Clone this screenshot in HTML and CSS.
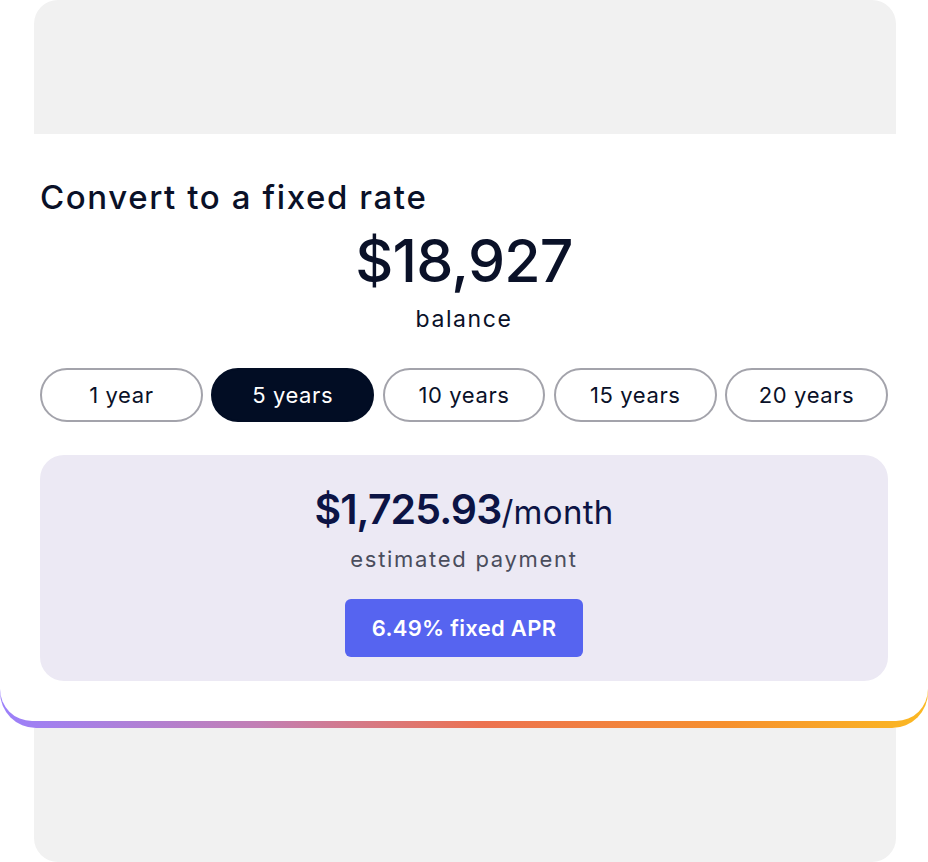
FILE: index.html
```html
<!DOCTYPE html>
<html>
<head>
<meta charset="utf-8">
<link rel="stylesheet" href="styles.css">
</head>
<body>
<div class="page">
  <div class="grey grey-top"></div>
  <div class="card-wrap">
    <div class="card">
      <h1 class="title">Convert to a fixed rate</h1>
      <div class="balance">
        <div class="amount">$18,927</div>
        <div class="label">balance</div>
      </div>
      <div class="terms">
        <button class="term">1 year</button>
        <button class="term active">5 years</button>
        <button class="term">10 years</button>
        <button class="term">15 years</button>
        <button class="term">20 years</button>
      </div>
      <div class="panel">
        <div class="payment"><span class="pay-amt">$1,725.93</span><span class="pay-unit">/month</span></div>
        <div class="pay-label">estimated payment</div>
        <div class="apr">6.49% fixed APR</div>
      </div>
    </div>
  </div>
  <div class="grey grey-bottom"></div>
</div>
</body>
</html>
```
FILE: styles.css
```css
* { box-sizing: border-box; }
html, body { margin: 0; padding: 0; background: #ffffff; }
body { font-family: "Inter", "Noto Sans", sans-serif; color: #0a1128; width: 928px; height: 862px; overflow: hidden; }
.page { display: flex; flex-direction: column; }
.grey { background: #f1f1f1; margin: 0 32px 0 34px; height: 134px; }
.grey-top { border-radius: 24px 24px 0 0; }
.grey-bottom { border-radius: 0 0 24px 24px; }
.card-wrap {
  background: linear-gradient(90deg, #9b80fb 0%, #c27fb4 28%, #ec7250 52%, #f6902e 78%, #fbb923 100%);
  border-radius: 0 0 36px 36px;
  padding-bottom: 7px;
}
.card {
  background: #ffffff;
  border-radius: 0 0 32px 32px;
  padding: 44px 40px 40px 40px;
  height: 587px;
}
.title { margin: 0; font-size: 33px; font-weight: 500; letter-spacing: 1.6px; line-height: 38px; }
.balance { text-align: center; margin-top: 10px; }
.amount { font-size: 59px; font-weight: 500; line-height: 70px; letter-spacing: -0.8px; }
.label { font-size: 23px; line-height: 28px; margin-top: 9px; letter-spacing: 1.6px; }
.terms { display: grid; grid-template-columns: repeat(5, 1fr); gap: 8.5px; margin-top: 35px; }
.term {
  height: 54px; border: 2px solid #a3a3ab; border-radius: 27px; background: #fff;
  font-family: inherit; font-size: 22px; color: #0a1128; padding: 0; letter-spacing: 0.6px;
}
.term.active { background: #020d24; border-color: #020d24; color: #ffffff; }
.panel {
  margin-top: 33px; background: #ece9f4; border-radius: 24px; height: 226px;
  display: flex; flex-direction: column; align-items: center; padding-top: 28px;
}
.payment { color: #0c1445; line-height: 52px; }
.pay-amt { font-size: 41px; font-weight: 600; letter-spacing: -0.9px; }
.pay-unit { font-size: 33px; letter-spacing: 0.3px; }
.pay-label { font-size: 22px; color: #4a4d5c; line-height: 28px; margin-top: 1px; letter-spacing: 1.7px; }
.apr {
  margin-top: 26px; width: 238px; height: 58px; border-radius: 6px; background: #5664f0;
  color: #fff; font-size: 22px; font-weight: 600; display: flex; align-items: center; justify-content: center; letter-spacing: 0.3px;
}
```
